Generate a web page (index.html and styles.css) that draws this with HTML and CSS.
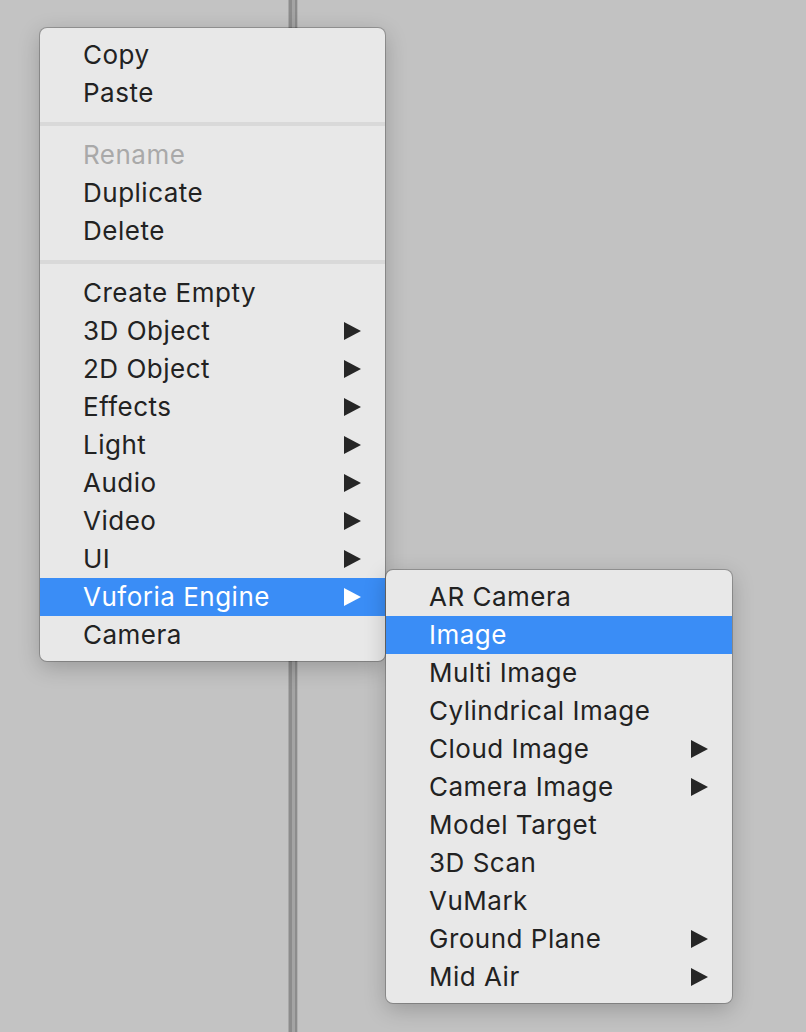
FILE: index.html
```html
<!DOCTYPE html>
<html>
<head>
<meta charset="utf-8">
<link rel="stylesheet" href="styles.css">
</head>
<body>
<div class="workspace">
  <div class="pane pane-left"></div>
  <div class="splitter"><span class="s1"></span><span class="s2"></span><span class="s3"></span></div>
  <div class="pane pane-right"></div>
</div>

<div class="menu menu-main">
  <div class="item">Copy</div>
  <div class="item">Paste</div>
  <div class="sep"></div>
  <div class="item disabled">Rename</div>
  <div class="item">Duplicate</div>
  <div class="item">Delete</div>
  <div class="sep"></div>
  <div class="item">Create Empty</div>
  <div class="item sub">3D Object<svg class="arrow" viewBox="0 0 17 18"><polygon points="0,0 17,9 0,18"/></svg></div>
  <div class="item sub">2D Object<svg class="arrow" viewBox="0 0 17 18"><polygon points="0,0 17,9 0,18"/></svg></div>
  <div class="item sub">Effects<svg class="arrow" viewBox="0 0 17 18"><polygon points="0,0 17,9 0,18"/></svg></div>
  <div class="item sub">Light<svg class="arrow" viewBox="0 0 17 18"><polygon points="0,0 17,9 0,18"/></svg></div>
  <div class="item sub">Audio<svg class="arrow" viewBox="0 0 17 18"><polygon points="0,0 17,9 0,18"/></svg></div>
  <div class="item sub">Video<svg class="arrow" viewBox="0 0 17 18"><polygon points="0,0 17,9 0,18"/></svg></div>
  <div class="item sub">UI<svg class="arrow" viewBox="0 0 17 18"><polygon points="0,0 17,9 0,18"/></svg></div>
  <div class="item sub active">Vuforia Engine<svg class="arrow" viewBox="0 0 17 18"><polygon points="0,0 17,9 0,18"/></svg></div>
  <div class="item">Camera</div>
</div>

<div class="menu menu-sub">
  <div class="item">AR Camera</div>
  <div class="item active">Image</div>
  <div class="item">Multi Image</div>
  <div class="item">Cylindrical Image</div>
  <div class="item sub">Cloud Image<svg class="arrow" viewBox="0 0 17 18"><polygon points="0,0 17,9 0,18"/></svg></div>
  <div class="item sub">Camera Image<svg class="arrow" viewBox="0 0 17 18"><polygon points="0,0 17,9 0,18"/></svg></div>
  <div class="item">Model Target</div>
  <div class="item">3D Scan</div>
  <div class="item">VuMark</div>
  <div class="item sub">Ground Plane<svg class="arrow" viewBox="0 0 17 18"><polygon points="0,0 17,9 0,18"/></svg></div>
  <div class="item sub">Mid Air<svg class="arrow" viewBox="0 0 17 18"><polygon points="0,0 17,9 0,18"/></svg></div>
</div>
</body>
</html>
```

FILE: styles.css
```css
html, body {
  margin: 0;
  padding: 0;
}
body {
  width: 806px;
  height: 1032px;
  overflow: hidden;
  background: #c2c2c2;
  font-family: "Inter", "Liberation Sans", sans-serif;
  position: relative;
}
.workspace {
  display: flex;
  height: 1032px;
}
.pane-left {
  width: 288px;
  background: #c3c3c3;
}
.pane-right {
  flex: 1;
  background: #c2c2c2;
}
.splitter {
  display: flex;
  width: 10px;
}
.splitter .s1 {
  width: 3px;
  background: #8c8c8c;
  border-left: 1px solid #a8a8a8;
}
.splitter .s2 {
  width: 3px;
  background: #a4a4a4;
}
.splitter .s3 {
  width: 2px;
  background: #8c8c8c;
  border-right: 1px solid #b0b0b0;
}

.menu {
  position: absolute;
  background: #e8e8e8;
  border-radius: 7px;
  padding: 8px 0 7px;
  box-shadow: 0 0 0 1px rgba(0, 0, 0, 0.22), 0 6px 22px rgba(0, 0, 0, 0.22);
  box-sizing: border-box;
}
.menu-main {
  left: 40px;
  top: 28px;
  width: 345px;
}
.menu-sub {
  left: 386px;
  top: 570px;
  width: 346px;
}
.item {
  height: 38px;
  display: flex;
  align-items: center;
  justify-content: space-between;
  padding: 0 24px 1px 43px;
  box-sizing: border-box;
  font-size: 26px;
  color: #222222;
  letter-spacing: 0.5px;
}
.item.disabled {
  color: #a9a9a9;
}
.item.active {
  background: #3a8df6;
  color: #ffffff;
}
.arrow {
  width: 17px;
  height: 18px;
  fill: #262626;
}
.item.active .arrow {
  fill: #ffffff;
}
.sep {
  height: 4px;
  margin: 10px 0;
  background: #d9d9d9;
}
```
